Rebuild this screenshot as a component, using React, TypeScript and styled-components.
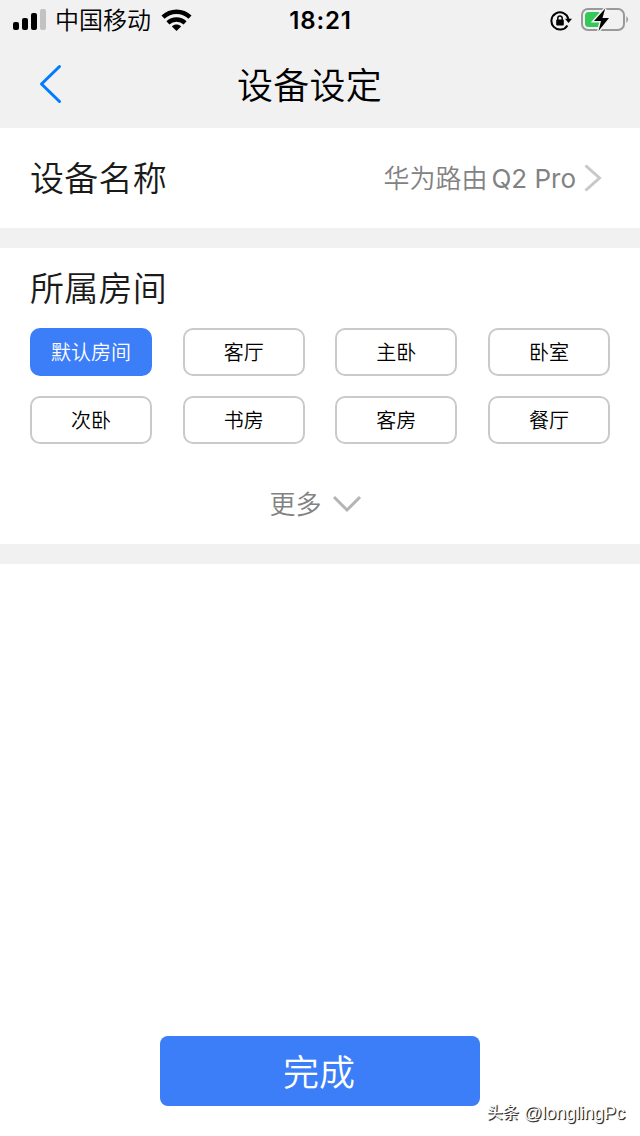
import React, { useState } from "react";
import styled, { createGlobalStyle } from "styled-components";

const GlobalStyle = createGlobalStyle`
  * { box-sizing: border-box; }
  body {
    margin: 0;
    background: #fff;
    font-family: Inter, "Noto Sans CJK SC", sans-serif;
    color: #000;
  }
  button { font: inherit; padding: 0; border: 0; background: none; }
`;

const Screen = styled.main`
  position: relative;
  width: 640px;
  height: 1136px;
  display: flex;
  flex-direction: column;
  background: #fff;
  overflow: hidden;
`;

const StatusBar = styled.header`
  height: 40px;
  display: grid;
  grid-template-columns: 1fr auto 1fr;
  align-items: center;
  padding: 0 11px 0 12px;
  background: #f1f1f1;
`;

const StatusGroup = styled.div<{ $end?: boolean }>`
  height: 40px;
  display: flex;
  align-items: center;
  justify-content: ${(p) => (p.$end ? "flex-end" : "flex-start")};
  gap: ${(p) => (p.$end ? "8px" : "9px")};
`;

const Carrier = styled.span`
  padding-top: 2px;
  font-size: 24px;
  line-height: 38px;
  font-weight: 350;
`;

const Clock = styled.time`
  padding-top: 2px;
  font-size: 24px;
  line-height: 38px;
  font-weight: 600;
  letter-spacing: 0.8px;
`;

const NavBar = styled.nav`
  height: 88px;
  display: grid;
  grid-template-columns: 100px 1fr 100px;
  align-items: center;
  background: #f1f1f1;
`;

const BackButton = styled.button`
  display: flex;
  padding-left: 38px;
`;

const Title = styled.h1`
  margin: 0;
  padding: 4px 21px 0 0;
  font-size: 36px;
  line-height: 84px;
  font-weight: 350;
  letter-spacing: 0.3px;
  text-align: center;
`;

const NameRow = styled.section`
  height: 100px;
  display: flex;
  align-items: center;
  justify-content: space-between;
  padding: 0 37px 0 30px;
`;

const Label = styled.h2`
  margin: 0;
  padding-top: 2px;
  font-size: 34px;
  line-height: 48px;
  font-weight: 350;
  letter-spacing: 0.25px;
  color: #1a1a1a;
`;

const NameValue = styled.div`
  display: flex;
  align-items: center;
  gap: 7px;
  font-size: 26px;
  font-weight: 350;
  color: #828282;
`;

const ValueText = styled.span`
  padding-bottom: 4px;
`;

const Model = styled.span`
  margin-left: 4px;
  font-weight: 400;
`;

const Divider = styled.div`
  height: 20px;
  flex: none;
  background: #f1f1f1;
`;

const RoomSection = styled.section`
  height: 296px;
  padding: 15px 30px 0;
`;

const RoomGrid = styled.div`
  display: grid;
  grid-template-columns: repeat(4, 122px);
  justify-content: space-between;
  row-gap: 20px;
  margin-top: 15px;
`;

const RoomChip = styled.button<{ $selected: boolean }>`
  height: 48px;
  padding-top: 2px;
  border-radius: 10px;
  border: 2px solid ${(p) => (p.$selected ? "#3b7ef8" : "#cacaca")};
  background: ${(p) => (p.$selected ? "#3b7ef8" : "#fff")};
  color: ${(p) => (p.$selected ? "#fff" : "#000")};
  font-size: 20px;
  line-height: 42px;
  font-weight: 350;
`;

const MoreButton = styled.button`
  display: flex;
  align-items: center;
  gap: 10px;
  margin: 40px auto 0;
  padding-right: 9px;
  font-size: 26px;
  line-height: 40px;
  font-weight: 350;
  color: #828282;
`;

const MoreText = styled.span`
  padding-top: 2px;
  line-height: 38px;
`;

const Footer = styled.footer`
  margin-top: auto;
  padding-bottom: 30px;
  display: flex;
  justify-content: center;
`;

const DoneButton = styled.button`
  width: 320px;
  height: 70px;
  padding: 4px 2px 0 0;
  border-radius: 8px;
  background: #3b7ef8;
  color: #fff;
  font-size: 36px;
  line-height: 66px;
  font-weight: 350;
`;

const Watermark = styled.div`
  position: absolute;
  right: 15px;
  bottom: 12px;
  display: flex;
  gap: 5px;
  font-family: "Liberation Sans", "Noto Sans CJK SC", sans-serif;
  font-size: 18px;
  line-height: 22px;
  color: #fff;
  text-shadow: 1px 1px 1px #333, 1px 1px 0 #333;
`;

const WatermarkSource = styled.span`
  font-size: 16px;
`;

const rooms = ["默认房间", "客厅", "主卧", "卧室", "次卧", "书房", "客房", "餐厅"];

const SignalIcon = () => (
  <svg width="34" height="22" viewBox="0 0 34 22">
    <rect x="1" y="13" width="6" height="8" rx="2" />
    <rect x="10" y="9" width="6" height="12" rx="2" />
    <rect x="19" y="4" width="6" height="17" rx="2" />
    <rect x="28" y="0" width="6" height="21" rx="2" fill="#c2c2c2" />
  </svg>
);

const WifiIcon = () => (
  <svg width="32" height="24" viewBox="0 0 32 24" fill="none" stroke="#000" strokeWidth="4.4">
    <path d="M3 9.2C10.5 2 22.5 2 30 9.2" />
    <path d="M7.9 14.8C12.7 10.3 20.3 10.3 25.1 14.8" />
    <path d="M11.9 18.4C14.5 16 18.5 16 21.1 18.4L16.5 23Z" fill="#000" stroke="none" />
  </svg>
);

const RotationLockIcon = () => (
  <svg width="22" height="22" viewBox="0 0 22 22" fill="none" stroke="#000" strokeWidth="2">
    <path d="M17.4 16.4A8.6 8.6 0 1 1 18.4 10" />
    <path d="M15 9.7H22L18.5 14Z" fill="#000" stroke="none" />
    <rect x="6.2" y="10.6" width="7.6" height="5.8" rx="1" fill="#000" stroke="none" />
    <path d="M7.8 11V9.2a2.2 2.2 0 0 1 4.4 0V11" strokeWidth="1.5" />
  </svg>
);

const BatteryIcon = () => (
  <svg width="49" height="26" viewBox="0 0 49 26">
    <rect x="2" y="2" width="42" height="21" rx="6" fill="none" stroke="#999" strokeWidth="2" />
    <path d="M46.3 9Q49.8 12.5 46.3 16Z" fill="#999" />
    <rect x="5" y="5" width="16" height="15" rx="3.5" fill="#34c759" />
    <path
      d="M25.2 1.5L14 14H21L18.5 24L29 11H22.5Z"
      fill="#000"
      stroke="#f1f1f1"
      strokeWidth="3"
      paintOrder="stroke"
    />
  </svg>
);

export default function App() {
  const [selected, setSelected] = useState(rooms[0]);
  return (
    <>
      <GlobalStyle />
      <Screen>
        <StatusBar>
          <StatusGroup>
            <SignalIcon />
            <Carrier>中国移动</Carrier>
            <WifiIcon />
          </StatusGroup>
          <Clock>18:21</Clock>
          <StatusGroup $end>
            <RotationLockIcon />
            <BatteryIcon />
          </StatusGroup>
        </StatusBar>
        <NavBar>
          <BackButton aria-label="返回">
            <svg width="26" height="42" viewBox="0 0 26 42" fill="none" stroke="#007aff" strokeWidth="3" strokeLinecap="round" strokeLinejoin="round">
              <path d="M21.5 3.5L3.5 21L21.5 38.5" />
            </svg>
          </BackButton>
          <Title>设备设定</Title>
        </NavBar>
        <NameRow>
          <Label>设备名称</Label>
          <NameValue>
            <ValueText>
              华为路由<Model>Q2 Pro</Model>
            </ValueText>
            <svg width="20" height="30" viewBox="0 0 20 30" fill="none" stroke="#c8c8c8" strokeWidth="3">
              <path d="M2.5 2.5L16.5 15L2.5 27.5" />
            </svg>
          </NameValue>
        </NameRow>
        <Divider />
        <RoomSection>
          <Label>所属房间</Label>
          <RoomGrid>
            {rooms.map((room) => (
              <RoomChip key={room} $selected={room === selected} onClick={() => setSelected(room)}>
                {room}
              </RoomChip>
            ))}
          </RoomGrid>
          <MoreButton>
            <MoreText>更多</MoreText>
            <svg width="30" height="20" viewBox="0 0 30 20" fill="none" stroke="#b4b4b4" strokeWidth="3">
              <path d="M2 3L15 16L28 3" />
            </svg>
          </MoreButton>
        </RoomSection>
        <Divider />
        <Footer>
          <DoneButton>完成</DoneButton>
        </Footer>
        <Watermark>
          <WatermarkSource>头条</WatermarkSource>
          <span>@longlingPc</span>
        </Watermark>
      </Screen>
    </>
  );
}
